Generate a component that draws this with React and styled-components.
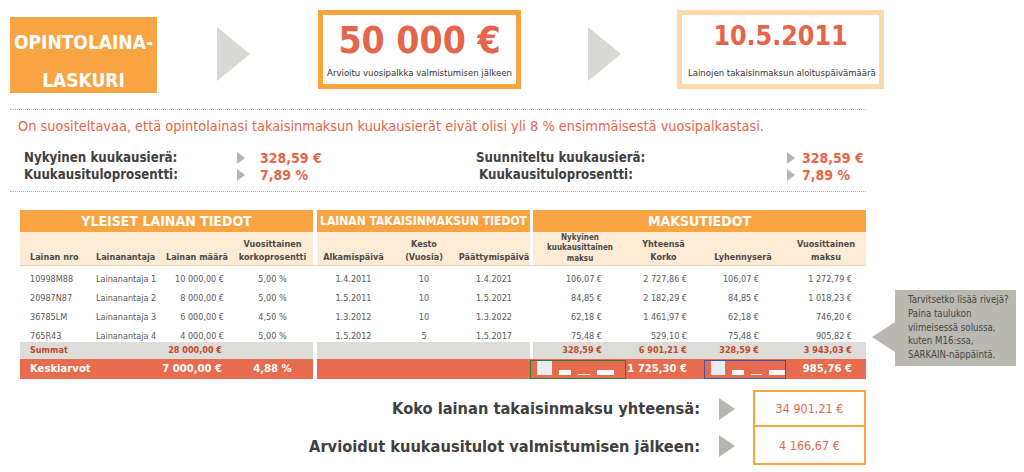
import React from 'react';
import styled, { createGlobalStyle } from 'styled-components';

const ORANGE = '#f9a443';
const RED = '#e5654a';
const DARK = '#404040';
const cols = '68px 72px 72px 81px 4px 73px 68px 72px 3px 94px 73px 86px 80px';

const GlobalStyle = createGlobalStyle`
  body {
    margin: 0;
    background: #fff;
    font-family: "DejaVu Sans Condensed", "DejaVu Sans", sans-serif;
  }
`;

const Page = styled.div`
  position: relative;
  width: 1024px;
  height: 472px;
  overflow: hidden;
  display: flex;
  flex-direction: column;
`;

const HeaderRow = styled.div`
  display: flex;
  align-items: flex-start;
  height: 99px;
  padding-top: 10px;
`;

const Logo = styled.div`
  margin: 7px 0 0 10px;
  width: 147px;
  height: 76px;
  background: ${ORANGE};
  color: #fff;
  font-weight: bold;
  font-size: 19px;
  line-height: 38px;
  text-align: center;
  padding-top: 6px;
  box-sizing: border-box;
  white-space: nowrap;
`;

const BigArrow = styled.div`
  margin: 17px 0 0 ${p => p.$ml}px;
  width: 0;
  height: 0;
  border-left: 33px solid #d8d8d4;
  border-top: 27px solid transparent;
  border-bottom: 27px solid transparent;
`;

const InfoBox = styled.div`
  margin-left: ${p => p.$ml}px;
  width: ${p => p.$w}px;
  height: 79px;
  box-sizing: border-box;
  border: 5px solid ${p => p.$border};
  display: flex;
  flex-direction: column;
  align-items: ${p => (p.$left ? 'flex-start' : 'center')};
  padding: 0 6px;
`;

const BigValue = styled.div`
  color: ${RED};
  font-weight: bold;
  font-size: ${p => p.$size}px;
  line-height: ${p => p.$lh}px;
  margin-top: ${p => p.$mt}px;
  align-self: center;
  white-space: nowrap;
`;

const Caption = styled.div`
  font-size: 9.5px;
  line-height: 12px;
  color: #333;
  margin-top: ${p => p.$mt}px;
  white-space: nowrap;
`;

const Divider = styled.div`
  margin: ${p => p.$mt}px 0 0 10px;
  width: 856px;
  border-top: 1px dotted #b0b0b0;
`;

const Message = styled.div`
  margin: 6px 0 0 18px;
  height: 20px;
  line-height: 20px;
  font-size: 14.4px;
  color: ${RED};
  white-space: nowrap;
`;

const Summary = styled.div`
  margin: 13px 0 0 24px;
  display: grid;
  grid-template-columns: 213px 23px 216px 311px 15px auto;
  grid-auto-rows: 17px;
  align-items: center;
`;

const SumLabel = styled.div`
  font-weight: bold;
  font-size: 13.2px;
  color: ${DARK};
  padding-left: ${p => p.$pl || 0}px;
  white-space: nowrap;
`;

const SmallArrow = styled.div`
  width: 0;
  height: 0;
  border-left: 8px solid #b5b5b1;
  border-top: 6px solid transparent;
  border-bottom: 6px solid transparent;
`;

const SumValue = styled.div`
  font-weight: bold;
  font-size: 14px;
  color: ${RED};
  white-space: nowrap;
`;

const Table = styled.div`
  margin: 18px 0 0 20px;
  width: 846px;
  display: flex;
  flex-direction: column;
`;

const Row = styled.div`
  display: grid;
  grid-template-columns: ${cols};
  height: ${p => p.$h}px;
  background: ${p => p.$bg || 'transparent'};
  border-bottom: ${p => (p.$line ? '1px solid #f3d2ad' : 'none')};
`;

const Section = styled.div`
  grid-column: ${p => p.$span};
  background: ${ORANGE};
  color: #fff;
  font-weight: bold;
  font-size: ${p => p.$size || 14}px;
  text-align: center;
  line-height: 22px;
  white-space: nowrap;
  overflow: hidden;
`;

const Sep = styled.div`
  background: #fff;
`;

const Head = styled.div`
  background: #fdebd5;
  color: #4a4a4a;
  font-weight: bold;
  font-size: ${p => p.$size || 9}px;
  line-height: ${p => p.$lh || 13}px;
  display: flex;
  flex-direction: column;
  justify-content: flex-end;
  align-items: ${p => p.$align || 'center'};
  text-align: center;
  padding: 0 ${p => p.$pr || 0}px 1px ${p => p.$pl || 0}px;
  white-space: nowrap;
`;

const Cell = styled.div`
  font-size: ${p => p.$size || 9}px;
  font-weight: ${p => (p.$bold ? 'bold' : 'normal')};
  color: ${p => p.$color || '#595959'};
  line-height: ${p => p.$lh}px;
  text-align: ${p => p.$align || 'left'};
  padding: 0 ${p => p.$pr || 0}px 0 ${p => p.$pl || 0}px;
  white-space: nowrap;
`;

const Glitch = styled.div`
  grid-column: ${p => p.$span};
  margin: 1px ${p => p.$mr || 0}px 1px ${p => p.$ml || 0}px;
  border: 1.5px solid ${p => p.$border};
  display: flex;
  align-items: flex-end;
  gap: 7px;
  padding: 0 0 3px 6px;
`;

const GlyphBox = styled.span`
  width: ${p => p.$w}px;
  height: ${p => p.$h}px;
  background: ${p => p.$bg || '#fff'};
  display: block;
`;

const Bottom = styled.div`
  margin-top: 11px;
  display: grid;
  grid-template-columns: 700px 19px 16px 18px 113px;
  grid-template-rows: 37px 38px;
  align-items: center;
`;

const BigLabel = styled.div`
  text-align: right;
  font-weight: bold;
  font-size: 16.3px;
  color: ${DARK};
  white-space: nowrap;
`;

const MidArrow = styled.div`
  grid-column: 3;
  width: 0;
  height: 0;
  border-left: 16px solid #b5b5b1;
  border-top: 11px solid transparent;
  border-bottom: 11px solid transparent;
`;

const TotalBox = styled.div`
  grid-column: 5;
  align-self: stretch;
  box-sizing: border-box;
  border: 2px solid ${ORANGE};
  border-top-width: ${p => (p.$first ? 2 : 0)}px;
  display: flex;
  align-items: center;
  justify-content: center;
  font-size: 12.5px;
  color: ${RED};
`;

const Tip = styled.div`
  position: absolute;
  left: 895px;
  top: 290px;
  width: 121px;
  height: 76px;
  box-sizing: border-box;
  background: #b9b8b1;
  color: #474747;
  font-size: 9.6px;
  line-height: 13.8px;
  padding: 3px 0 0 13px;
  white-space: nowrap;
  &::before {
    content: '';
    position: absolute;
    left: -23px;
    top: 32px;
    border-right: 23px solid #b9b8b1;
    border-top: 15px solid transparent;
    border-bottom: 15px solid transparent;
  }
`;

const loans = [
  ['10998M88', 'Lainanantaja 1', '10 000,00 €', '5,00 %', '1.4.2011', '10', '1.4.2021', '106,07 €', '2 727,86 €', '106,07 €', '1 272,79 €'],
  ['20987N87', 'Lainanantaja 2', '8 000,00 €', '5,00 %', '1.5.2011', '10', '1.5.2021', '84,85 €', '2 182,29 €', '84,85 €', '1 018,23 €'],
  ['36785LM', 'Lainanantaja 3', '6 000,00 €', '4,50 %', '1.3.2012', '10', '1.3.2022', '62,18 €', '1 461,97 €', '62,18 €', '746,20 €'],
  ['765R43', 'Lainanantaja 4', '4 000,00 €', '5,00 %', '1.5.2012', '5', '1.5.2017', '75,48 €', '529,10 €', '75,48 €', '905,82 €'],
];

const Glyphs = () => (
  <>
    <GlyphBox $w={15} $h={14} $bg="#e8ecf6" />
    <GlyphBox $w={12} $h={5} />
    <GlyphBox $w={12} $h={1} />
    <GlyphBox $w={17} $h={5} />
  </>
);

const DataRow = ({ d, h }) => (
  <Row $h={h}>
    <Cell $lh={19} $pl={10}>{d[0]}</Cell>
    <Cell $lh={19} $pl={8}>{d[1]}</Cell>
    <Cell $lh={19} $align="right" $pr={8}>{d[2]}</Cell>
    <Cell $lh={19} $align="center">{d[3]}</Cell>
    <Sep />
    <Cell $lh={19} $align="center">{d[4]}</Cell>
    <Cell $lh={19} $align="center">{d[5]}</Cell>
    <Cell $lh={19} $align="center">{d[6]}</Cell>
    <Sep />
    <Cell $lh={19} $align="right" $pr={25}>{d[7]}</Cell>
    <Cell $lh={19} $align="right" $pr={13}>{d[8]}</Cell>
    <Cell $lh={19} $align="right" $pr={27}>{d[9]}</Cell>
    <Cell $lh={19} $align="right" $pr={14}>{d[10]}</Cell>
  </Row>
);

export default function App() {
  return (
    <Page>
      <GlobalStyle />
      <HeaderRow>
        <Logo>OPINTOLAINA-<br />LASKURI</Logo>
        <BigArrow $ml={60} />
        <InfoBox $ml={68} $w={203} $border="#f8a43c">
          <BigValue $size={37} $lh={44} $mt={4}>50 000 €</BigValue>
          <Caption $mt={4}>Arvioitu vuosipalkka valmistumisen jälkeen</Caption>
        </InfoBox>
        <BigArrow $ml={67} />
        <InfoBox $ml={56} $w={207} $border="#fdd9a8" $left>
          <BigValue $size={26.5} $lh={32} $mt={5}>10.5.2011</BigValue>
          <Caption $mt={15}>Lainojen takaisinmaksun aloituspäivämäärä</Caption>
        </InfoBox>
      </HeaderRow>
      <Divider $mt={0} />
      <Message>
        On suositeltavaa, että opintolainasi takaisinmaksun kuukausierät eivät olisi yli 8 % ensimmäisestä vuosipalkastasi.
      </Message>
      <Summary>
        <SumLabel>Nykyinen kuukausierä:</SumLabel>
        <SmallArrow />
        <SumValue>328,59 €</SumValue>
        <SumLabel>Suunniteltu kuukausierä:</SumLabel>
        <SmallArrow />
        <SumValue>328,59 €</SumValue>
        <SumLabel>Kuukausituloprosentti:</SumLabel>
        <SmallArrow />
        <SumValue>7,89 %</SumValue>
        <SumLabel $pl={3}>Kuukausituloprosentti:</SumLabel>
        <SmallArrow />
        <SumValue>7,89 %</SumValue>
      </Summary>
      <Divider $mt={8} />
      <Table>
        <Row $h={22}>
          <Section $span="1 / 5" $size={14}>YLEISET LAINAN TIEDOT</Section>
          <Sep />
          <Section $span="6 / 9" $size={12}>LAINAN TAKAISINMAKSUN TIEDOT</Section>
          <Sep />
          <Section $span="10 / 14" $size={14}>MAKSUTIEDOT</Section>
        </Row>
        <Row $h={33} $line>
          <Head $align="flex-start" $pl={10}>Lainan nro</Head>
          <Head $align="flex-start" $pl={8}>Lainanantaja</Head>
          <Head $align="flex-end" $pr={4}>Lainan määrä</Head>
          <Head>Vuosittainen<br />korkoprosentti</Head>
          <Sep />
          <Head>Alkamispäivä</Head>
          <Head>Kesto<br />(Vuosia)</Head>
          <Head>Päättymispäivä</Head>
          <Sep />
          <Head $size={8} $lh={10.5}>Nykyinen<br />kuukausittainen<br />maksu</Head>
          <Head>Yhteensä<br />Korko</Head>
          <Head>Lyhennyserä</Head>
          <Head>Vuosittainen<br />maksu</Head>
        </Row>
        <Row $h={4} />
        {loans.map((d, i) => (
          <DataRow key={d[0]} d={d} h={i === loans.length - 1 ? 15 : 19} />
        ))}
        <Row $h={17} $bg="#dcdcd8">
          <Cell $lh={17} $pl={10} $bold $color="#c24a28">Summat</Cell>
          <Cell />
          <Cell $lh={17} $align="right" $pr={10} $bold $color="#c24a28">28 000,00 €</Cell>
          <Cell />
          <Sep />
          <Cell />
          <Cell />
          <Cell />
          <Sep />
          <Cell $lh={17} $align="right" $pr={25} $bold $color="#c24a28">328,59 €</Cell>
          <Cell $lh={17} $align="right" $pr={13} $bold $color="#c24a28">6 901,21 €</Cell>
          <Cell $lh={17} $align="right" $pr={27} $bold $color="#c24a28">328,59 €</Cell>
          <Cell $lh={17} $align="right" $pr={14} $bold $color="#c24a28">3 943,03 €</Cell>
        </Row>
        <Row $h={20} $bg="#e76b4e">
          <Cell $lh={20} $pl={10} $bold $size={11.2} $color="#fff">Keskiarvot</Cell>
          <Cell />
          <Cell $lh={20} $align="right" $pr={10} $bold $size={11.2} $color="#fff">7 000,00 €</Cell>
          <Cell $lh={20} $align="center" $bold $size={11.2} $color="#fff">4,88 %</Cell>
          <Sep />
          <Cell />
          <Cell />
          <Cell />
          <Glitch $span="9 / 11" $border="#2e7d38" $mr={1}><Glyphs /></Glitch>
          <Cell $lh={20} $align="right" $pr={13} $bold $size={11.2} $color="#fff">1 725,30 €</Cell>
          <Glitch $span="12 / 13" $border="#3b55a8" $ml={4}><Glyphs /></Glitch>
          <Cell $lh={20} $align="right" $pr={14} $bold $size={11.2} $color="#fff">985,76 €</Cell>
        </Row>
      </Table>
      <Bottom>
        <BigLabel>Koko lainan takaisinmaksu yhteensä:</BigLabel>
        <MidArrow />
        <TotalBox $first>34 901,21 €</TotalBox>
        <BigLabel>Arvioidut kuukausitulot valmistumisen jälkeen:</BigLabel>
        <MidArrow />
        <TotalBox>4 166,67 €</TotalBox>
      </Bottom>
      <Tip>
        Tarvitsetko lisää rivejä?<br />
        Paina taulukon<br />
        viimeisessä solussa,<br />
        kuten M16:ssa,<br />
        SARKAIN-näppäintä.
      </Tip>
    </Page>
  );
}
